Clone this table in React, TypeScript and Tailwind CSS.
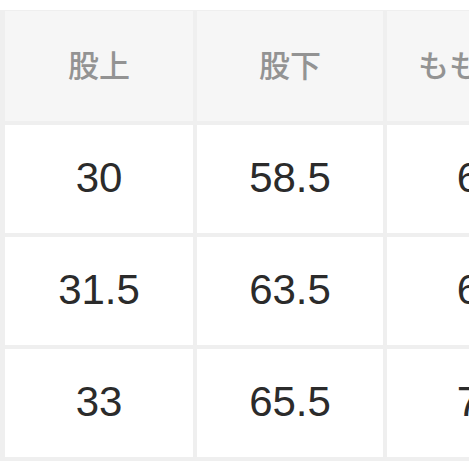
import React from "react";

const headers = ["股上", "股下", "もも周り"];
const rows = [
  ["30", "58.5", "66"],
  ["31.5", "63.5", "68"],
  ["33", "65.5", "71"],
];

export default function App() {
  return (
    <div className="w-[469px] h-[469px] overflow-hidden bg-white">
      <div className="mt-[10px] w-[600px] bg-[#efefef] pl-[5px] pr-[4px] pt-[1px] pb-[4px] grid grid-cols-[188px_186px_186px] grid-rows-[110px_108px_108px_108px] gap-x-[4px] gap-y-[4px]">
        {headers.map((h) => (
          <div
            key={h}
            className="bg-[#f6f6f6] flex items-center justify-center text-[31px] font-medium text-[#939393] pb-[4px]"
            style={{ fontFamily: '"Noto Sans CJK JP", "Noto Sans", sans-serif' }}
          >
            {h}
          </div>
        ))}
        {rows.map((r, i) =>
          r.map((v, j) => (
            <div
              key={`${i}-${j}`}
              className="bg-white flex items-center justify-center text-[42px] text-[#2b2b2b] pb-[4px]"
              style={{ fontFamily: '"Liberation Sans", Arial, sans-serif' }}
            >
              {v}
            </div>
          ))
        )}
      </div>
    </div>
  );
}
